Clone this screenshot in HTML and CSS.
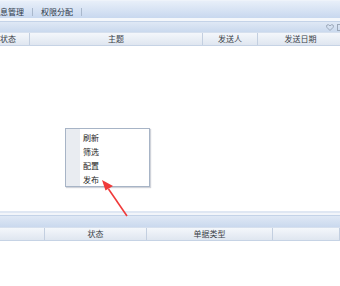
FILE: index.html
```html
<!DOCTYPE html>
<html>
<head>
<meta charset="utf-8">
<link rel="stylesheet" href="styles.css">
</head>
<body>
<div class="page">
  <div class="tabbar">
    <span class="tab">息管理</span><span class="sep"></span>
    <span class="tab">权限分配</span><span class="sep"></span>
  </div>
  <div class="gap"></div>
  <div class="panel-head">
    <span class="tools">
      <svg width="8" height="7" viewBox="0 0 8 7"><path d="M4 6.5 L1 3.5 Q0 2 1 1 Q2.2 0 4 1.8 Q5.8 0 7 1 Q8 2 7 3.5 Z" fill="none" stroke="#9aa7b8" stroke-width="1"/></svg>
      <svg width="6" height="7" viewBox="0 0 6 7"><rect x="0.5" y="0.5" width="6" height="6" fill="none" stroke="#9aa7b8"/></svg>
    </span>
  </div>
  <div class="col-head">
    <div class="cell w30 left">状态</div>
    <div class="cell w173">主题</div>
    <div class="cell w55">发送人</div>
    <div class="cell w86">发送日期</div>
  </div>
  <div class="body-top"></div>
  <div class="divider"></div>
  <div class="panel-head small"></div>
  <div class="col-head">
    <div class="cell w45"></div>
    <div class="cell w102">状态</div>
    <div class="cell w126">单据类型</div>
    <div class="cell w67"></div>
  </div>
  <div class="body-bottom"></div>

  <div class="menu">
    <div class="item">刷新</div>
    <div class="item">筛选</div>
    <div class="item">配置</div>
    <div class="item">发布</div>
  </div>
  <svg class="arrow" width="40" height="40" viewBox="0 0 40 40">
    <path d="M27 38 L8.5 11" stroke="#f03a3a" stroke-width="1.6" fill="none"/>
    <path d="M2 2 L13 8 L5.5 12.5 Z" fill="#f03a3a"/>
  </svg>
</div>
</body>
</html>
```
FILE: styles.css
```css
html, body {
  margin: 0;
  padding: 0;
  background: #fff;
}
.page {
  position: relative;
  width: 340px;
  height: 286px;
  overflow: hidden;
  display: flex;
  flex-direction: column;
  font-family: "Noto Sans CJK SC", "Noto Sans", sans-serif;
  font-size: 8px;
  color: #333;
}
.tabbar {
  height: 18px;
  flex: none;
  display: flex;
  align-items: center;
  background: linear-gradient(#e8eff9, #c8d8ef);
  border-top: 1px solid #eef3fa;
  box-sizing: border-box;
  padding-top: 4px;
  color: #2f3a4a;
}
.tab {
  padding: 0 8px;
  line-height: 10px;
}
.tab:first-child {
  padding-left: 0;
}
.sep {
  width: 1px;
  height: 8px;
  background: #a9b8cc;
}
.gap {
  height: 3px;
  flex: none;
  background: #f4f7fb;
}
.panel-head {
  height: 11px;
  flex: none;
  background: linear-gradient(#dfe8f5, #cad9ee);
  border-top: 1px solid #c4d3e8;
  box-sizing: border-box;
  display: flex;
  justify-content: flex-end;
  align-items: center;
}
.panel-head.small {
  height: 12px;
}
.tools {
  display: flex;
  gap: 3px;
  margin-right: -3px;
  align-items: center;
}
.col-head {
  height: 14px;
  flex: none;
  display: flex;
  background: linear-gradient(#f4f7fb, #dfe6f0);
  border-top: 1px solid #d6e0ee;
  border-bottom: 1px solid #c6d3e5;
  box-sizing: border-box;
  color: #3a3f48;
}
.cell {
  flex: none;
  box-sizing: border-box;
  text-align: center;
  line-height: 12px;
  border-right: 1px solid #c3cfe0;
  white-space: nowrap;
}
.cell.left {
  text-align: left;
}
.w30 { width: 30px; }
.w173 { width: 173px; }
.w55 { width: 55px; }
.w86 { width: 86px; }
.w45 { width: 45px; }
.w102 { width: 102px; }
.w126 { width: 126px; }
.w67 { width: 67px; }
.body-top {
  height: 164px;
  flex: none;
}
.divider {
  height: 5px;
  flex: none;
  background: linear-gradient(#fff 0, #fff 1px, #dfe7f3 1px, #dfe7f3 3px, #f2f5fa 3px);
}
.body-bottom {
  flex: 1;
}
.menu {
  position: absolute;
  left: 65px;
  top: 128px;
  width: 85px;
  height: 59px;
  box-sizing: border-box;
  border: 1px solid #a7b4c6;
  background: linear-gradient(to right, #e9ecf1 0, #e9ecf1 14px, #fff 14px);
  box-shadow: 1px 1px 1px rgba(120, 130, 150, 0.35);
  padding-top: 2px;
}
.item {
  height: 14px;
  line-height: 14px;
  padding-left: 17px;
  color: #222;
}
.arrow {
  position: absolute;
  left: 100px;
  top: 178px;
}
```
